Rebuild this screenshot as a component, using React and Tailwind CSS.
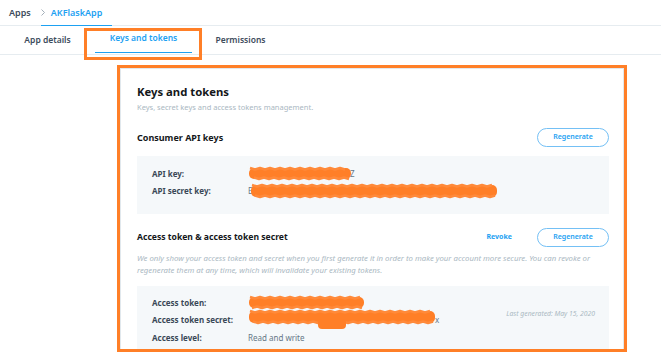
import React from 'react';

const Scribble = ({ w, h = 14, bulge }) => {
    const pts = [];
    for (let x = 2; x < w - 2; x += 5) {
        pts.push(`${x},${x % 10 === 2 ? 2 : 3.5}`);
    }
    const bottom = [];
    for (let x = w - 3; x > 2; x -= 5) {
        bottom.push(`${x},${x % 10 < 5 ? h - 2 : h - 3.5}`);
    }
    return (
        <svg width={w} height={bulge ? h + 6 : h} className="block">
            <rect x="1" y="2" width={w - 2} height={h - 4} rx="5" fill="#ff7f27" />
            <polyline points={pts.join(' ')} fill="none" stroke="#ff8a3a" strokeWidth="2.5" strokeLinejoin="round" />
            <polyline points={bottom.join(' ')} fill="none" stroke="#ff8a3a" strokeWidth="2.5" strokeLinejoin="round" />
            {bulge && <rect x={bulge[0]} y={h - 6} width={bulge[1]} height="10" rx="4" fill="#ff7f27" />}
        </svg>
    );
};

const Row = ({ label, children }) => (
    <div className="flex items-center h-[17.5px]">
        <div className="w-[96px] shrink-0 text-[8px] font-bold text-[#3a4857]">{label}</div>
        <div className="flex items-center text-[8px] text-[#657786]">{children}</div>
    </div>
);

const RegenButton = () => (
    <button className="w-[72px] h-[19px] rounded-full border border-[#74c0f5] text-[7px] font-semibold text-[#1da1f2] bg-white">
        Regenerate
    </button>
);

export default function App() {
    return (
        <div className="relative w-[661px] h-[352px] overflow-hidden bg-white font-['Noto_Sans',sans-serif]">
            {/* breadcrumb */}
            <div className="h-[26px] border-b border-[#e6ecf0] flex items-stretch pl-[9px]">
                <span className="flex items-center text-[9px] font-semibold text-[#3d4c5c] mr-[10px]">Apps</span>
                <span className="flex items-center gap-[6px] pr-[10px] border-b-[1.5px] border-[#1da1f2] -mb-[1px]">
                    <svg width="4" height="7" viewBox="0 0 4 7" className="block">
                        <polyline points="0.5,0.5 3.5,3.5 0.5,6.5" fill="none" stroke="#9aa7b2" strokeWidth="0.9" />
                    </svg>
                    <span className="text-[9px] font-semibold text-[#1da1f2]">AKFlaskApp</span>
                </span>
            </div>

            {/* tabs */}
            <div className="h-[29px] border-b border-[#e6ecf0] flex">
                <div className="w-[95px] flex items-center justify-center text-[8.5px] font-semibold text-[#3d4c5c]">App details</div>
                <div className="w-[97px] flex items-center justify-center text-[8.5px] font-semibold text-[#1da1f2] border-b-[1.5px] border-[#1da1f2] mb-[1.5px]">
                    Keys and tokens
                </div>
                <div className="w-[97px] flex items-center justify-center text-[8.5px] font-semibold text-[#3d4c5c]">Permissions</div>
            </div>

            {/* annotation on tab */}
            <div className="absolute left-[84px] top-[28px] w-[118px] h-[32px] border-[3px] border-[#ff7f27]" />

            {/* main */}
            <div className="pt-[10px] pl-[117px]">
                <div className="w-[510px] h-[287px] border-[3px] border-[#ff7f27] overflow-hidden">
                    <div className="h-[300px] border border-[#e1e8ed] pl-[16px] pr-[14px] pt-[15px]">
                        <div className="text-[11.3px] leading-[16px] font-bold text-[#14171a]">Keys and tokens</div>
                        <div className="mt-[1px] text-[7.5px] leading-[12px] text-[#aab8c2]">
                            Keys, secret keys and access tokens management.
                        </div>

                        <div className="mt-[15px] h-[19px] flex items-center justify-between">
                            <div className="text-[9px] font-bold text-[#14171a]">Consumer API keys</div>
                            <RegenButton />
                        </div>

                        <div className="mt-[9px] h-[58px] bg-[#f5f8fa] pl-[15px] pt-[9px]">
                            <Row label="API key:">
                                <Scribble w={104} h={15} />
                                <span className="-ml-[2px]">Z</span>
                            </Row>
                            <Row label="API secret key:">
                                <span className="mr-[-2px]">E</span>
                                <Scribble w={248} h={16} />
                            </Row>
                        </div>

                        <div className="mt-[14px] h-[19px] flex items-center justify-between">
                            <div className="text-[8.6px] font-bold text-[#14171a]">Access token &amp; access token secret</div>
                            <div className="flex items-center gap-[25px]">
                                <span className="text-[7px] font-bold text-[#1da1f2]">Revoke</span>
                                <RegenButton />
                            </div>
                        </div>

                        <div className="mt-[5px] text-[7.8px] leading-[12px] italic text-[#aab8c2]">
                            We only show your access token and secret when you first generate it in order to make your account more secure. You can revoke or
                            <br />
                            regenerate them at any time, which will invalidate your existing tokens.
                        </div>

                        <div className="mt-[10px] h-[80px] bg-[#f5f8fa] pl-[15px] pr-[14px] pt-[8px] flex justify-between">
                            <div>
                                <Row label="Access token:">
                                    <Scribble w={117} h={15} />
                                </Row>
                                <Row label="Access token secret:">
                                    <Scribble w={188} h={16} bulge={[70, 28]} />
                                    <span className="-ml-[1px]">x</span>
                                </Row>
                                <Row label="Access level:">Read and write</Row>
                            </div>
                            <div className="mt-[14px] text-[6.8px] leading-[12px] italic text-[#aab8c2]">
                                Last generated: May 15, 2020
                            </div>
                        </div>
                    </div>
                </div>
            </div>
        </div>
    );
}
